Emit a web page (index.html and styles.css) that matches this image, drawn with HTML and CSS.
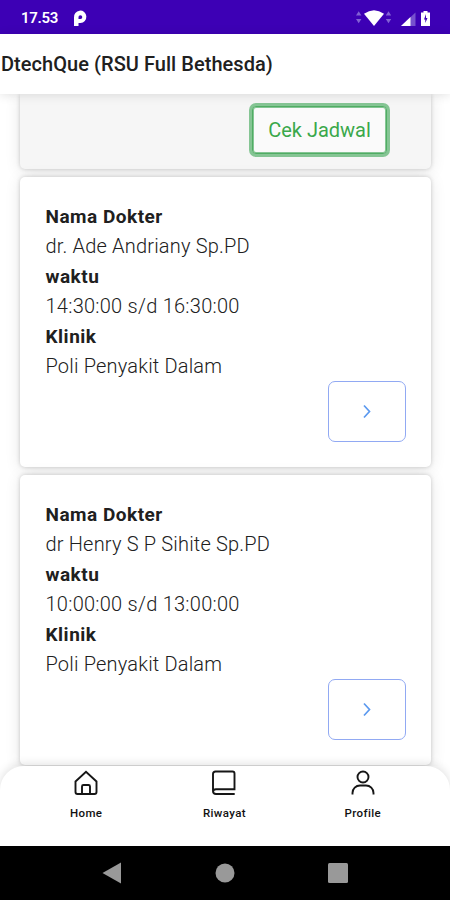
FILE: index.html
```html
<!DOCTYPE html>
<html lang="id">
<head>
<meta charset="utf-8">
<title>DtechQue</title>
<link rel="stylesheet" href="styles.css">
</head>
<body>
<div class="phone">
  <div class="status">
    <span class="clock">17.53</span>
    <svg class="parking" width="14" height="17" viewBox="0 0 14 17"><path fill="#fff" fill-rule="evenodd" d="M1 16V7.500A6.200 6.200 0 1 1 7.500 13H5.500V16zM5.500 9h2a1.900 1.900 0 1 0-2-1.900z"/></svg>
    <svg class="signals" width="76" height="18" viewBox="0 0 76 18">
      <path fill="#8261d4" d="M0 6.500 2.700 2.300 5.400 6.500zM0 10h5.400L2.700 14.200zM29.800 6.500 32.500 2.300 35.200 6.500zM29.800 10h5.400l-2.700 4.200z"/>
      <path fill="#fff" d="M8 4.800Q18-2.400 28 4.800L18 17z"/>
      <path fill="#7650ce" d="M45 17 59.500 3.500V17z"/>
      <path fill="#fff" d="M45 17l9.500-9V17z"/>
      <path fill="#fff" d="M65 3.500h2.500V2h4v1.500H74V17h-9z"/>
      <path fill="#3d00b5" d="M70 5 68 10.500h1.300V14l2.200-5h-1.500z"/>
    </svg>
  </div>
  <header class="header"><h1>DtechQue (RSU Full Bethesda)</h1></header>
  <main class="content">
    <section class="card search"><button class="check">Cek Jadwal</button></section>
    <section class="card doctor">
      <dl><dt>Nama Dokter</dt><dd>dr. Ade Andriany Sp.PD</dd><dt>waktu</dt><dd class="time">14:30:00 s/d 16:30:00</dd><dt>Klinik</dt><dd>Poli Penyakit Dalam</dd></dl>
      <button class="next"><svg width="10" height="15" viewBox="0 0 10 15"><path d="M2 1.500 7.500 7.500 2 13.500"/></svg></button>
    </section>
    <section class="card doctor">
      <dl><dt>Nama Dokter</dt><dd>dr Henry S P Sihite Sp.PD</dd><dt>waktu</dt><dd class="time">10:00:00 s/d 13:00:00</dd><dt>Klinik</dt><dd>Poli Penyakit Dalam</dd></dl>
      <button class="next"><svg width="10" height="15" viewBox="0 0 10 15"><path d="M2 1.500 7.500 7.500 2 13.500"/></svg></button>
    </section>
  </main>
  <nav class="tabs">
    <a class="tab"><svg width="26" height="26" viewBox="0 0 26 26"><path d="M2.500 11.500 13 1.800l10.500 9.700V22q0 2-2 2h-17q-2 0-2-2zM9 24v-7.500q0-1.500 1.500-1.500h5q1.500 0 1.500 1.500V24"/></svg><span>Home</span></a>
    <a class="tab"><svg width="26" height="26" viewBox="0 0 26 26"><path d="M23.700 24H5q-3 0-3-3V4q0-2.500 2.500-2.500h17q2 0 2 2v15.800H5q-3 0-3 2.500"/></svg><span>Riwayat</span></a>
    <a class="tab"><svg width="26" height="26" viewBox="0 0 26 26"><circle cx="13" cy="7" r="5.500"/><path d="M2.500 24.500v-1.500a7.500 7.500 0 0 1 7.500-7.500h6a7.500 7.500 0 0 1 7.500 7.500v1.500"/></svg><span>Profile</span></a>
  </nav>
  <div class="system">
    <svg width="20" height="22" viewBox="0 0 20 22"><path d="M.5 11 19 .5v21z"/></svg>
    <svg width="20" height="20" viewBox="0 0 20 20"><circle cx="10" cy="10" r="9.500"/></svg>
    <svg width="20" height="20" viewBox="0 0 20 20"><rect width="20" height="20" rx="1.500"/></svg>
  </div>
</div>
</body>
</html>
```
FILE: styles.css
```css
* { box-sizing: border-box; }
body { margin: 0; font-family: Roboto, sans-serif; color: #202020; }
.phone { width: 450px; height: 900px; overflow: hidden; display: flex; flex-direction: column; background: #fff; }
.status { flex: 0 0 34px; display: flex; align-items: center; padding: 2px 18px 0 21px; background: #3d00b5; color: #fff; }
.clock { width: 38px; font-size: 15px; font-weight: 600; letter-spacing: -.3px; }
.parking { margin-left: 14px; }
.signals { margin-left: auto; }
.header { flex: 0 0 60px; display: flex; align-items: center; padding-left: 1px; background: #fff; z-index: 1; box-shadow: 0 1px 10px rgba(0,0,0,.12); }
h1 { margin: 0; font-size: 20px; font-weight: 500; letter-spacing: .05px; white-space: nowrap; }
.content { flex: 0 0 672px; height: 672px; overflow: hidden; padding: 0 19px 0 20px; display: flex; flex-direction: column; gap: 7.500px; }
.card { flex-shrink: 0; border-radius: 5px; box-shadow: 0 0 4px rgba(0,0,0,.18), 0 2px 16px rgba(0,0,0,.1); background: #fff; }
.search { height: 75px; background: #f6f6f6; border-radius: 0 0 5px 5px; display: flex; justify-content: flex-end; align-items: flex-start; padding: 12px 44px 0 0; }
button { font-family: inherit; padding: 0; }
.check { width: 135px; height: 48px; border: 1px solid #50ad63; border-radius: 4px; background: #fafafa; box-shadow: 0 0 0 3px #85c594, inset 0 0 0 1px #85c594; color: #3aa84b; font-size: 20px; letter-spacing: 0; }
.doctor { height: 290.500px; padding: 24.400px 25px 0 25.500px; display: flex; flex-direction: column; }
dl { margin: 0; font-size: 20px; line-height: 29px; letter-spacing: .18px; }
dt { font-weight: 700; font-size: 19px; line-height: 31px; letter-spacing: .5px; }
dd { margin: 0; font-weight: 300; }
.time { letter-spacing: .25px; }
.next { align-self: flex-end; width: 78px; height: 61px; border: 1.500px solid #91a9f3; border-radius: 7px; background: #fff; display: flex; align-items: center; justify-content: center; }
.next svg { fill: none; stroke: #5b99ef; stroke-width: 1.700; }
.tabs { flex: 0 0 80px; z-index: 1; background: #fff; border-radius: 24px 24px 0 0; box-shadow: 0 -2px 10px rgba(0,0,0,.12); display: flex; padding: 4px 18px 0 17px; }
.tab { flex: 1; display: flex; flex-direction: column; align-items: center; font-size: 11.500px; font-weight: 500; line-height: 14px; letter-spacing: .4px; color: #111; gap: 10px; }
.tab svg { fill: none; stroke: #161616; stroke-width: 1.900; }
.system { flex: 1; background: #000; display: flex; align-items: center; justify-content: center; gap: 93px; z-index: 1; }
.system svg { fill: #999; }
```
